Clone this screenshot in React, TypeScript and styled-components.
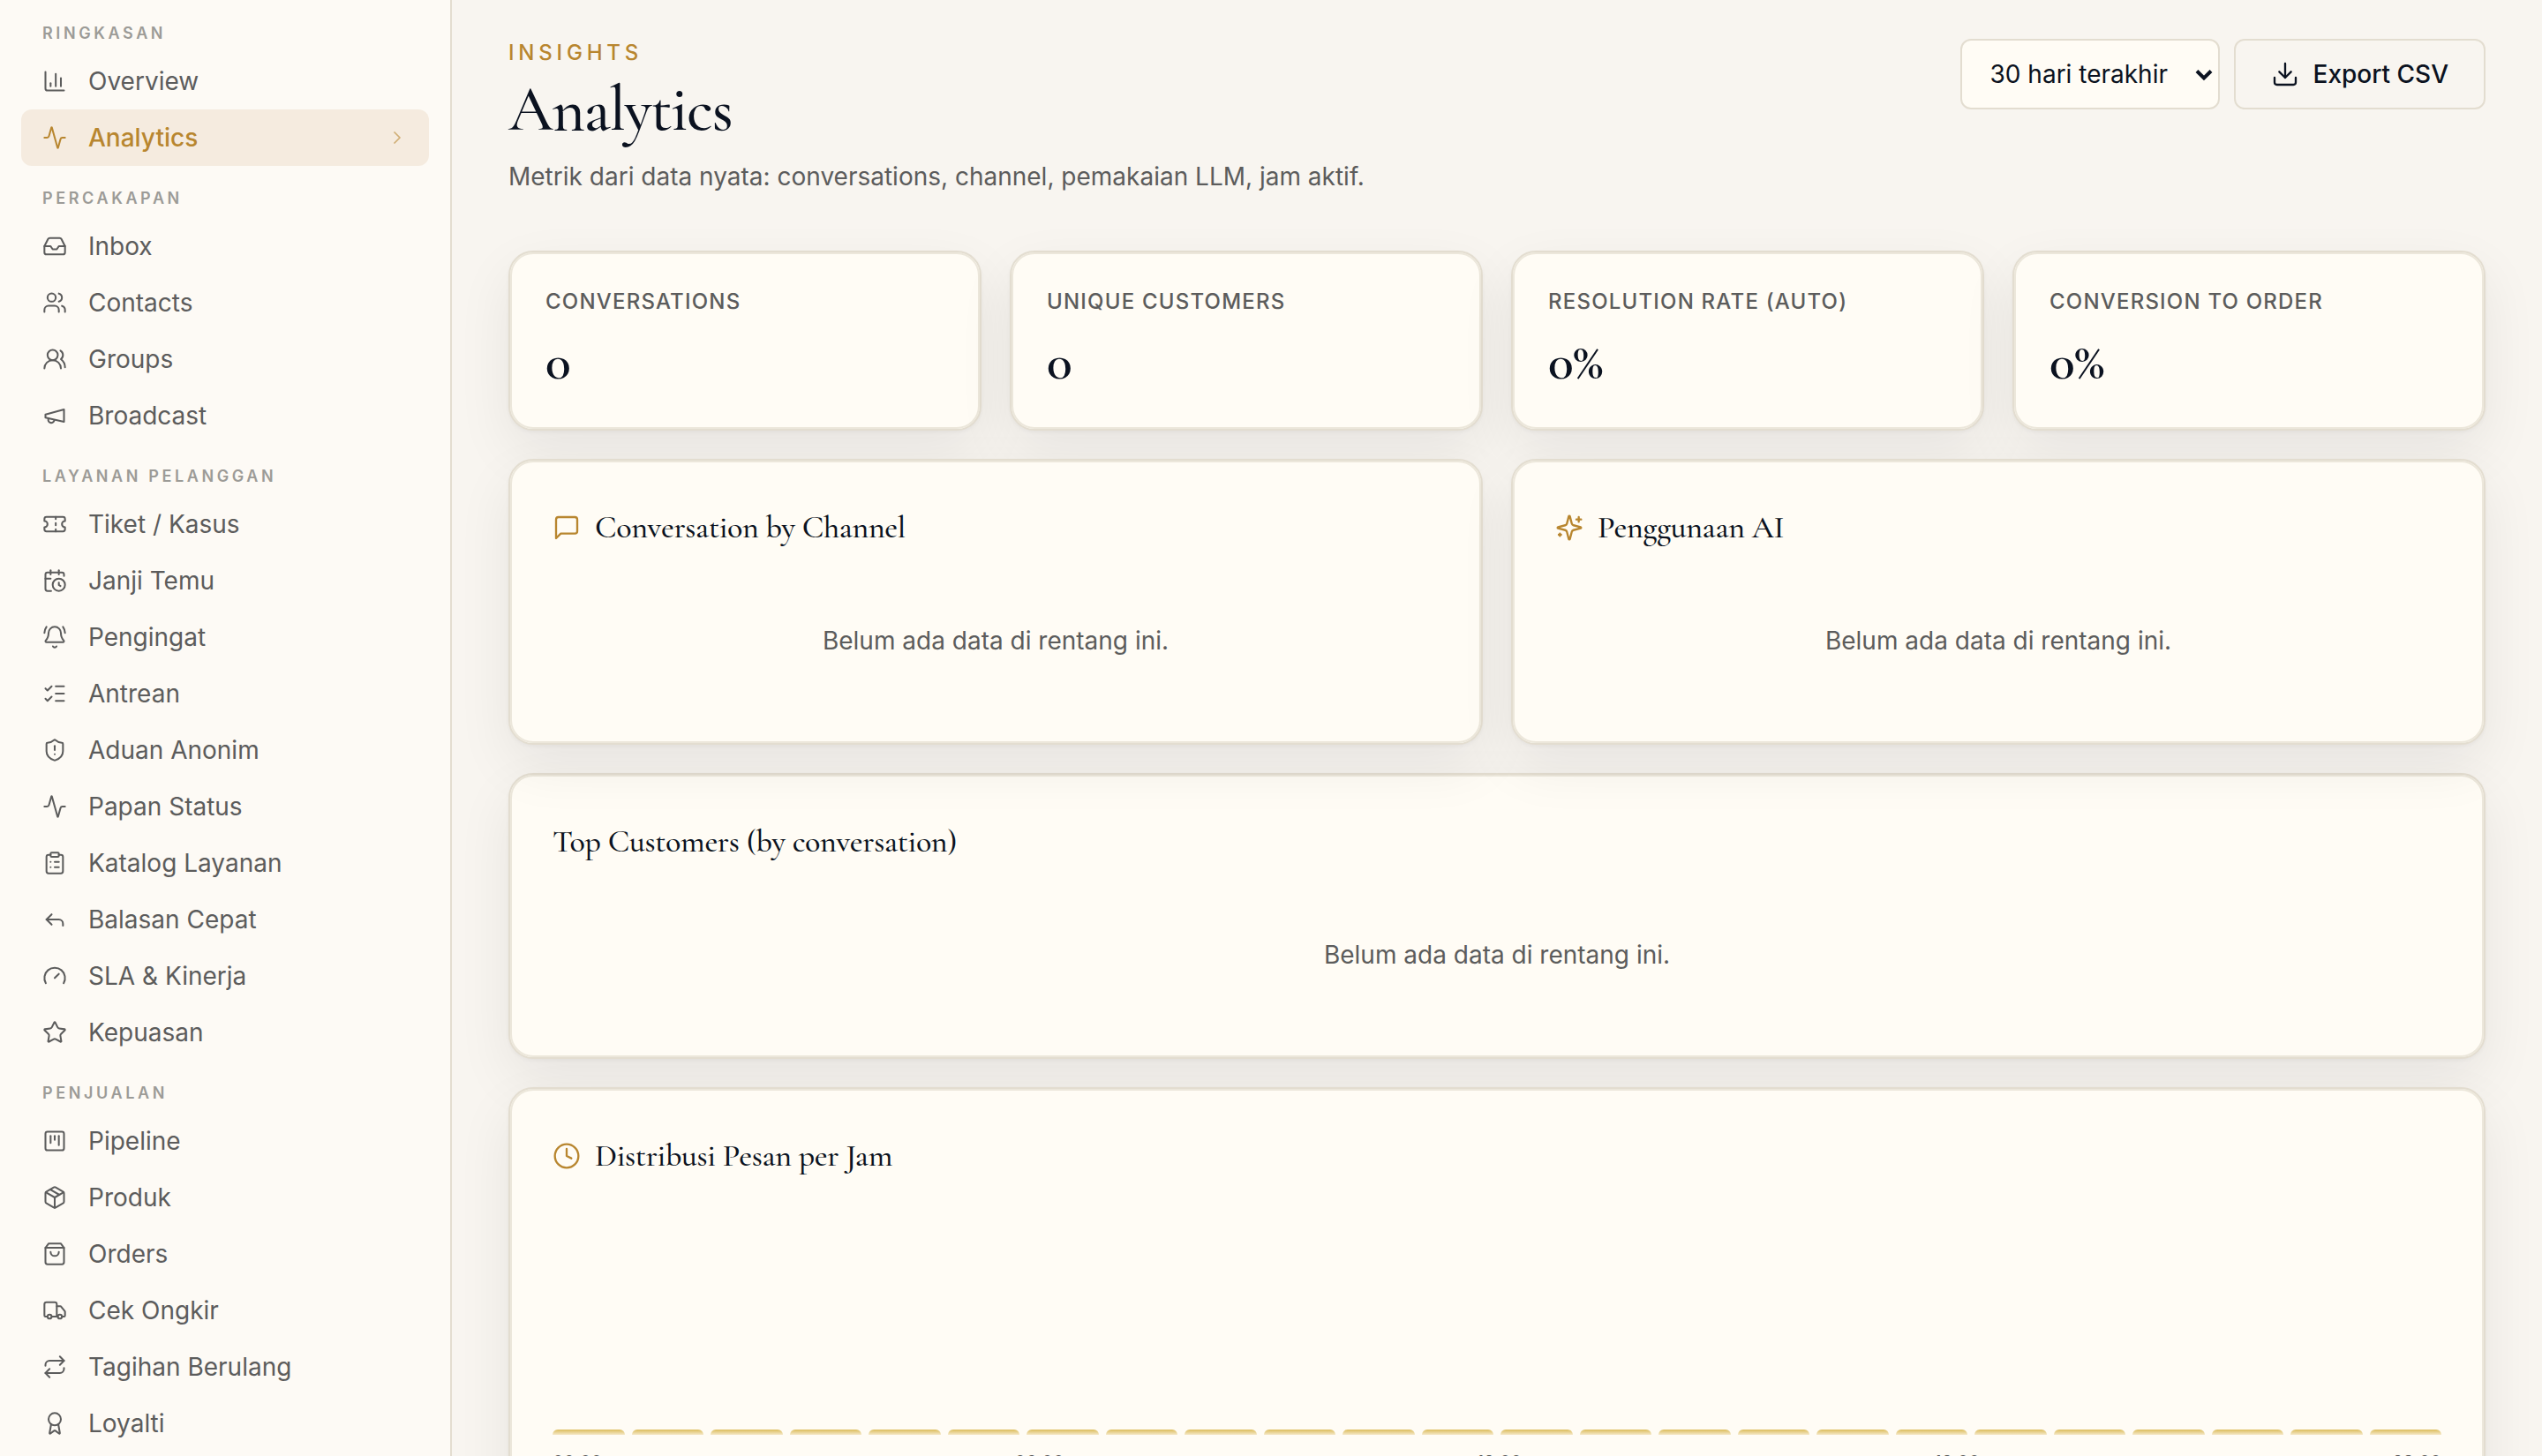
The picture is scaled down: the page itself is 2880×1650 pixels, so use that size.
import React from 'react';
import styled, { createGlobalStyle, css } from 'styled-components';
import {
  Activity,
  Award,
  BellRing,
  CalendarClock,
  ChartColumn,
  ChevronRight,
  ClipboardList,
  Clock,
  Download,
  Gauge,
  Inbox,
  ListChecks,
  Package,
  Repeat,
  Reply,
  ShieldAlert,
  SquareKanban,
  Star,
  Ticket,
  Truck,
  Users,
  UsersRound,
} from 'lucide-react';

const color = {
  page: '#f8f5f0',
  sidebar: '#fdfaf5',
  card: '#fffcf5',
  line: '#e3ddd0',
  lineSoft: '#ece7db',
  ink: '#0b1220',
  muted: '#5c5c5c',
  faint: '#9c9b97',
  gold: '#b8862f',
  goldSoft: '#f5ebdf',
};

const sans = `Inter, 'Liberation Sans', sans-serif`;
const serif = `'Cormorant Garamond', 'Liberation Serif', serif`;

const GlobalStyle = createGlobalStyle`
  *, *::before, *::after { box-sizing: border-box; }
  html, body { margin: 0; padding: 0; }
  body {
    background: ${color.page};
    color: ${color.ink};
    font-family: ${sans};
    font-size: 28px;
    line-height: 40px;
    -webkit-font-smoothing: antialiased;
  }
  h1, h2, p, dl, dt, dd, ul { margin: 0; padding: 0; }
  button, select { font: inherit; color: inherit; }
`;

const Shell = styled.div`
  display: flex;
  height: 100vh;
  overflow: hidden;
`;

const Sidebar = styled.nav`
  flex: 0 0 512px;
  padding: 1px 24px 0;
  background: ${color.sidebar};
  border-right: 2px solid ${color.line};
  overflow-y: auto;
  scrollbar-width: none;
`;

const GroupTitle = styled.h2`
  height: 59px;
  padding: 22px 24px 0;
  color: ${color.faint};
  font-size: 18px;
  line-height: 30px;
  font-weight: 600;
  letter-spacing: 0.2em;
  text-transform: uppercase;
`;

const NavList = styled.ul`
  list-style: none;
`;

const NavLink = styled.a<{ $active?: boolean }>`
  display: flex;
  align-items: center;
  gap: 24px;
  height: 64px;
  padding: 0 24px;
  border-radius: 12px;
  color: ${color.muted};
  text-decoration: none;
  ${(p) =>
    p.$active &&
    css`
      background: ${color.goldSoft};
      color: ${color.gold};
      font-weight: 500;
    `}
`;

const NavText = styled.span`
  flex: 1;
`;

const Faded = styled.span`
  display: flex;
  opacity: 0.6;
`;

const Main = styled.main`
  flex: 1;
  min-width: 0;
  display: flex;
  flex-direction: column;
  gap: 32px;
  padding: 44px 64px 64px;
  overflow-y: auto;
  scrollbar-width: none;
  > * {
    flex-shrink: 0;
  }
`;

const Header = styled.header`
  display: flex;
  align-items: flex-start;
  justify-content: space-between;
  margin-bottom: 32px;
`;

const Eyebrow = styled.p`
  color: ${color.gold};
  font-size: 24px;
  line-height: 32px;
  font-weight: 500;
  letter-spacing: 0.2em;
  text-transform: uppercase;
`;

const PageTitle = styled.h1`
  margin: 8px 0 16px;
  font-family: ${serif};
  font-size: 72px;
  line-height: 80px;
  font-weight: 500;
  letter-spacing: -0.02em;
`;

const Subtitle = styled.p`
  color: ${color.muted};
`;

const Actions = styled.div`
  display: flex;
  gap: 16px;
`;

const SelectBox = styled.div`
  position: relative;
  display: flex;
`;

const Select = styled.select`
  appearance: none;
  height: 80px;
  width: 294px;
  padding: 0 56px 0 32px;
  border: 2px solid ${color.line};
  border-radius: 12px;
  background: ${color.card};
`;

const SelectArrow = styled.svg`
  position: absolute;
  right: 8px;
  top: 34px;
  pointer-events: none;
`;

const ExportButton = styled.button`
  display: flex;
  align-items: center;
  gap: 16px;
  height: 80px;
  padding: 0 40px;
  border: 2px solid ${color.line};
  border-radius: 12px;
  background: transparent;
  font-weight: 500;
`;

const Grid = styled.div<{ $columns: number; $raised?: boolean }>`
  display: grid;
  grid-template-columns: repeat(${(p) => p.$columns}, minmax(0, 1fr));
  gap: 32px;
  ${(p) => p.$raised && 'position: relative;'}
`;

const surface = css`
  border: 2px solid ${color.line};
  border-radius: 28px;
  background: ${color.card};
  box-shadow:
    inset 0 0 0 2px ${color.lineSoft},
    0 2px 4px rgba(11, 18, 32, 0.04),
    0 24px 64px rgba(11, 18, 32, 0.07);
`;

const StatCard = styled.dl`
  ${surface}
  padding: 40px;
`;

const StatLabel = styled.dt`
  color: ${color.muted};
  font-size: 24px;
  line-height: 32px;
  font-weight: 500;
  letter-spacing: 0.05em;
  text-transform: uppercase;
`;

const StatValue = styled.dd`
  padding-top: 16px;
  font-family: ${serif};
  font-size: 60px;
  line-height: 72px;
  font-weight: 600;
  letter-spacing: -0.01em;
`;

const Panel = styled.section`
  ${surface}
  padding: 48px;
`;

const PanelTitle = styled.h2`
  display: flex;
  align-items: center;
  gap: 16px;
  margin-bottom: 32px;
  font-family: ${serif};
  font-size: 36px;
  line-height: 56px;
  font-weight: 500;
  letter-spacing: -0.01em;
  svg {
    color: ${color.gold};
  }
`;

const Empty = styled.p`
  padding: 48px 0;
  color: ${color.muted};
  text-align: center;
`;

const Bars = styled.div`
  display: flex;
  align-items: flex-end;
  gap: 8px;
  height: 256px;
`;

const Bar = styled.div`
  flex: 1;
  min-height: 6px;
  border-radius: 6px 6px 0 0;
  background: linear-gradient(#dcbd5c, #f5e8c8);
`;

const Axis = styled.div`
  display: flex;
  justify-content: space-between;
  margin-top: 16px;
  color: ${color.muted};
  font-size: 20px;
  line-height: 30px;
`;

type IconProps = { size?: number; strokeWidth?: number };

const outline = {
  viewBox: '0 0 24 24',
  fill: 'none',
  stroke: 'currentColor',
  strokeLinecap: 'round',
  strokeLinejoin: 'round',
} as const;

const MegaphoneIcon = ({ size, strokeWidth }: IconProps) => (
  <svg {...outline} width={size} height={size} strokeWidth={strokeWidth} aria-hidden="true">
    <path d="m3 11 18-5v12L3 14v-3z" />
    <path d="M11.6 16.8a3 3 0 1 1-5.8-1.6" />
  </svg>
);

const MessageIcon = ({ size, strokeWidth }: IconProps) => (
  <svg {...outline} width={size} height={size} strokeWidth={strokeWidth} aria-hidden="true">
    <path d="M21 15a2 2 0 0 1-2 2H7l-4 4V5a2 2 0 0 1 2-2h14a2 2 0 0 1 2 2z" />
  </svg>
);

const BagIcon = ({ size, strokeWidth }: IconProps) => (
  <svg {...outline} width={size} height={size} strokeWidth={strokeWidth} aria-hidden="true">
    <path d="M6 2 3 6v14a2 2 0 0 0 2 2h14a2 2 0 0 0 2-2V6l-3-4Z" />
    <path d="M3 6h18" />
    <path d="M16 10a4 4 0 0 1-8 0" />
  </svg>
);

const SparklesIcon = ({ size, strokeWidth }: IconProps) => (
  <svg {...outline} width={size} height={size} strokeWidth={strokeWidth} aria-hidden="true">
    <path d="M9.937 15.5A2 2 0 0 0 8.5 14.063l-6.135-1.582a.5.5 0 0 1 0-.962L8.5 9.936A2 2 0 0 0 9.937 8.5l1.582-6.135a.5.5 0 0 1 .963 0L14.063 8.5A2 2 0 0 0 15.5 9.937l6.135 1.581a.5.5 0 0 1 0 .964L15.5 14.063a2 2 0 0 0-1.437 1.437l-1.582 6.135a.5.5 0 0 1-.963 0z" />
    <path d="M20 3v4M22 5h-4M4 17v2M5 18H3" />
  </svg>
);

type NavEntry = { label: string; icon: React.ComponentType<IconProps>; active?: boolean };

const groups: { title: string; items: NavEntry[] }[] = [
  {
    title: 'Ringkasan',
    items: [
      { label: 'Overview', icon: ChartColumn },
      { label: 'Analytics', icon: Activity, active: true },
    ],
  },
  {
    title: 'Percakapan',
    items: [
      { label: 'Inbox', icon: Inbox },
      { label: 'Contacts', icon: Users },
      { label: 'Groups', icon: UsersRound },
      { label: 'Broadcast', icon: MegaphoneIcon },
    ],
  },
  {
    title: 'Layanan Pelanggan',
    items: [
      { label: 'Tiket / Kasus', icon: Ticket },
      { label: 'Janji Temu', icon: CalendarClock },
      { label: 'Pengingat', icon: BellRing },
      { label: 'Antrean', icon: ListChecks },
      { label: 'Aduan Anonim', icon: ShieldAlert },
      { label: 'Papan Status', icon: Activity },
      { label: 'Katalog Layanan', icon: ClipboardList },
      { label: 'Balasan Cepat', icon: Reply },
      { label: 'SLA & Kinerja', icon: Gauge },
      { label: 'Kepuasan', icon: Star },
    ],
  },
  {
    title: 'Penjualan',
    items: [
      { label: 'Pipeline', icon: SquareKanban },
      { label: 'Produk', icon: Package },
      { label: 'Orders', icon: BagIcon },
      { label: 'Cek Ongkir', icon: Truck },
      { label: 'Tagihan Berulang', icon: Repeat },
      { label: 'Loyalti', icon: Award },
    ],
  },
];

const stats = [
  { label: 'Conversations', value: '0' },
  { label: 'Unique customers', value: '0' },
  { label: 'Resolution rate (auto)', value: '0%' },
  { label: 'Conversion to order', value: '0%' },
];

const hourly: number[] = Array.from({ length: 24 }, () => 0);
const ticks = ['00:00', '06:00', '12:00', '18:00', '23:00'];
const emptyText = 'Belum ada data di rentang ini.';

export default function App() {
  return (
    <>
      <GlobalStyle />
      <Shell>
        <Sidebar aria-label="Menu">
          {groups.map((group) => (
            <React.Fragment key={group.title}>
              <GroupTitle>{group.title}</GroupTitle>
              <NavList>
                {group.items.map(({ label, icon: Icon, active }) => (
                  <li key={label}>
                    <NavLink href="#" $active={active} aria-current={active ? 'page' : undefined}>
                      <Icon size={28} strokeWidth={1.75} />
                      <NavText>{label}</NavText>
                      {active && (
                        <Faded>
                          <ChevronRight size={24} strokeWidth={1.75} />
                        </Faded>
                      )}
                    </NavLink>
                  </li>
                ))}
              </NavList>
            </React.Fragment>
          ))}
        </Sidebar>

        <Main>
          <Header>
            <div>
              <Eyebrow>Insights</Eyebrow>
              <PageTitle>Analytics</PageTitle>
              <Subtitle>Metrik dari data nyata: conversations, channel, pemakaian LLM, jam aktif.</Subtitle>
            </div>
            <Actions>
              <SelectBox>
                <Select aria-label="Rentang waktu" defaultValue="30">
                  <option value="7">7 hari terakhir</option>
                  <option value="30">30 hari terakhir</option>
                  <option value="90">90 hari terakhir</option>
                </Select>
                <SelectArrow width="20" height="14" viewBox="0 0 20 14" fill="none" stroke={color.ink} strokeWidth="4" aria-hidden="true">
                  <path d="M2 2.5 10 10.5 18 2.5" />
                </SelectArrow>
              </SelectBox>
              <ExportButton type="button">
                <Download size={32} strokeWidth={1.75} />
                Export CSV
              </ExportButton>
            </Actions>
          </Header>

          <Grid $columns={4}>
            {stats.map((stat) => (
              <StatCard key={stat.label}>
                <StatLabel>{stat.label}</StatLabel>
                <StatValue>{stat.value}</StatValue>
              </StatCard>
            ))}
          </Grid>

          <Grid $columns={2} $raised>
            <Panel>
              <PanelTitle>
                <MessageIcon size={32} strokeWidth={1.75} />
                Conversation by Channel
              </PanelTitle>
              <Empty>{emptyText}</Empty>
            </Panel>
            <Panel>
              <PanelTitle>
                <SparklesIcon size={32} strokeWidth={1.75} />
                Penggunaan AI
              </PanelTitle>
              <Empty>{emptyText}</Empty>
            </Panel>
          </Grid>

          <Panel>
            <PanelTitle>Top Customers (by conversation)</PanelTitle>
            <Empty>{emptyText}</Empty>
          </Panel>

          <Panel>
            <PanelTitle>
              <Clock size={32} strokeWidth={1.75} />
              Distribusi Pesan per Jam
            </PanelTitle>
            <Bars>
              {hourly.map((count, hour) => (
                <Bar key={hour} style={{ height: `${count}%` }} />
              ))}
            </Bars>
            <Axis>
              {ticks.map((tick) => (
                <span key={tick}>{tick}</span>
              ))}
            </Axis>
          </Panel>
        </Main>
      </Shell>
    </>
  );
}
